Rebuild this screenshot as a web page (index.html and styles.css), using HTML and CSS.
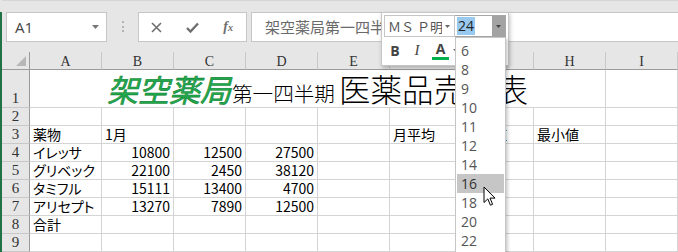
FILE: index.html
```html
<!DOCTYPE html>
<html lang="ja">
<head>
    <meta charset="UTF-8">
    <title>医薬品売上表 - Excel</title>
    <link rel="stylesheet" href="styles.css">
</head>
<body>
<div class="app">
    <div class="edge"></div>
    <div class="main">
        <div class="formula-bar">
            <div class="name-box">
                <span>A1</span>
                <svg class="caret" width="7" height="4" viewBox="0 0 7 4"><path d="M0 0H7L3.5 4Z" fill="#777"/></svg>
            </div>
            <div class="grip"><span></span></div>
            <div class="fx-buttons">
                <span class="fx-btn">
                    <svg width="11" height="11" viewBox="0 0 11 11"><path d="M1 1L10 10M10 1L1 10" stroke="#6f6f6f" stroke-width="1.6"/></svg>
                </span>
                <span class="fx-btn">
                    <svg width="13" height="11" viewBox="0 0 13 11"><path d="M1 6L4.5 9.5L12 1.5" fill="none" stroke="#6f6f6f" stroke-width="2.4"/></svg>
                </span>
                <span class="fx-btn fx-label"><i>f</i><sub>x</sub></span>
            </div>
            <div class="formula-input">架空薬局第一四半期医薬品売上表</div>
        </div>

        <div class="sheet">
            <div class="row head">
                <div class="corner"><svg width="10" height="10" viewBox="0 0 10 10"><path d="M10 0V10H0Z" fill="#b7b7b7"/></svg></div>
                <div class="ch">A</div><div class="ch">B</div><div class="ch">C</div><div class="ch">D</div><div class="ch">E</div>
                <div class="ch">F</div><div class="ch">G</div><div class="ch">H</div><div class="ch">I</div>
            </div>
            <div class="row tall">
                <div class="rh">1</div>
                <div class="cell title-cell">
                    <div class="title"><span class="brand">架空薬局</span><span class="sub">第一四半期</span><span class="big">医薬品売上表</span></div>
                </div>
                <div class="cell"></div>
            </div>
            <div class="row">
                <div class="rh">2</div>
                <div class="cell"></div><div class="cell"></div><div class="cell"></div><div class="cell"></div><div class="cell"></div>
                <div class="cell"></div><div class="cell"></div><div class="cell"></div><div class="cell"></div>
            </div>
            <div class="row">
                <div class="rh">3</div>
                <div class="cell">薬物</div><div class="cell">1月</div><div class="cell"></div><div class="cell"></div><div class="cell"></div>
                <div class="cell">月平均</div><div class="cell">最大値</div><div class="cell">最小値</div><div class="cell"></div>
            </div>
            <div class="row">
                <div class="rh">4</div>
                <div class="cell">イレッサ</div><div class="cell num">10800</div><div class="cell num">12500</div><div class="cell num">27500</div><div class="cell"></div>
                <div class="cell"></div><div class="cell"></div><div class="cell"></div><div class="cell"></div>
            </div>
            <div class="row">
                <div class="rh">5</div>
                <div class="cell">グリベック</div><div class="cell num">22100</div><div class="cell num">2450</div><div class="cell num">38120</div><div class="cell"></div>
                <div class="cell"></div><div class="cell"></div><div class="cell"></div><div class="cell"></div>
            </div>
            <div class="row">
                <div class="rh">6</div>
                <div class="cell">タミフル</div><div class="cell num">15111</div><div class="cell num">13400</div><div class="cell num">4700</div><div class="cell"></div>
                <div class="cell"></div><div class="cell"></div><div class="cell"></div><div class="cell"></div>
            </div>
            <div class="row">
                <div class="rh">7</div>
                <div class="cell">アリセプト</div><div class="cell num">13270</div><div class="cell num">7890</div><div class="cell num">12500</div><div class="cell"></div>
                <div class="cell"></div><div class="cell"></div><div class="cell"></div><div class="cell"></div>
            </div>
            <div class="row">
                <div class="rh">8</div>
                <div class="cell">合計</div><div class="cell"></div><div class="cell"></div><div class="cell"></div><div class="cell"></div>
                <div class="cell"></div><div class="cell"></div><div class="cell"></div><div class="cell"></div>
            </div>
            <div class="row">
                <div class="rh">9</div>
                <div class="cell"></div><div class="cell"></div><div class="cell"></div><div class="cell"></div><div class="cell"></div>
                <div class="cell"></div><div class="cell"></div><div class="cell"></div><div class="cell"></div>
            </div>
        </div>
    </div>

    <!-- floating mini toolbar -->
    <div class="mini-toolbar">
        <div class="mini-row">
            <div class="font-name">
                <span class="font-text">ＭＳ Ｐ明朝</span>
                <svg width="5" height="3" viewBox="0 0 5 3"><path d="M0 0H5L2.5 3Z" fill="#666"/></svg>
            </div>
            <div class="font-size">
                <span class="size-text"><span class="selected">24</span></span>
                <span class="size-drop"><svg width="5" height="3" viewBox="0 0 5 3"><path d="M0 0H5L2.5 3Z" fill="#444"/></svg></span>
            </div>
        </div>
        <div class="mini-row tools">
            <span class="tool bold">B</span>
            <span class="tool italic">I</span>
            <span class="tool color">A</span>
            <svg class="tool-caret" width="5" height="3" viewBox="0 0 5 3"><path d="M0 0H5L2.5 3Z" fill="#777"/></svg>
        </div>
    </div>

    <ul class="size-list">
        <li>6</li><li>8</li><li>9</li><li>10</li><li>11</li><li>12</li>
        <li>14</li><li class="hover">16</li><li>18</li><li>20</li><li>22</li>
    </ul>

    <svg class="cursor" width="14" height="21" viewBox="0 0 14 21">
        <path d="M1 1V16.5L4.8 12.9L7.4 19.2L9.6 18.3L7 12.1H12Z" fill="#fff" stroke="#000" stroke-width="1" stroke-linejoin="round"/>
    </svg>
</div>
</body>
</html>
```

FILE: styles.css
```css
* {
    box-sizing: border-box;
}
body {
    margin: 0;
    width: 678px;
    height: 252px;
    overflow: hidden;
    background-color: #e6e6e6;
    font-family: "Noto Sans CJK JP", sans-serif;
    color: #000;
}
.app {
    position: relative;
    display: flex;
    height: 252px;
    overflow: hidden;
}
.edge {
    flex: none;
    width: 2px;
    margin-top: 12px;
    background-color: #217346;
}
.main {
    flex: 1;
    min-width: 0;
}

/* formula bar */
.formula-bar {
    display: flex;
    align-items: flex-start;
    height: 52px;
    padding: 11px 0 0 4px;
    border-top: 1px solid #d6d6d6;
}
.name-box {
    display: flex;
    align-items: center;
    justify-content: space-between;
    width: 101px;
    height: 30px;
    padding: 0 7px 0 8px;
    background-color: #fff;
    border: 1px solid #c6c6c6;
    font-family: "Open Sans", sans-serif;
    font-size: 15px;
    color: #444;
}
.grip {
    display: flex;
    justify-content: center;
    width: 31px;
    padding-top: 9px;
}
.grip span {
    height: 11px;
    border-left: 2px dotted #b3b3b3;
}
.fx-buttons {
    display: flex;
    width: 109px;
    height: 30px;
    background-color: #fff;
    border: 1px solid #c6c6c6;
}
.fx-btn {
    display: flex;
    align-items: center;
    justify-content: center;
    width: 36px;
}
.fx-label {
    font-family: "Liberation Serif", serif;
    font-size: 14px;
    color: #6f6f6f;
    font-weight: bold;
}
.fx-label sub {
    font-size: 10px;
    font-style: italic;
    vertical-align: -1px;
}
.formula-input {
    flex: 1;
    height: 30px;
    margin: 0 -4px 0 4px;
    padding-left: 13px;
    background-color: #fff;
    border: 1px solid #c6c6c6;
    font-size: 15px;
    line-height: 28px;
    color: #6a6a6a;
    white-space: nowrap;
    overflow: hidden;
}

/* sheet grid */
.row {
    display: grid;
    grid-template-columns: 28px repeat(9, 72px);
    height: 18px;
    background-color: #fff;
}
.row.tall {
    height: 38px;
    grid-template-columns: 28px 576px 72px;
}
.cell {
    border-right: 1px solid #d4d4d4;
    border-bottom: 1px solid #d4d4d4;
    padding: 0 3px;
    font-size: 14px;
    line-height: 17px;
    white-space: nowrap;
    font-feature-settings: "palt";
}
.cell.num {
    text-align: right;
    font-feature-settings: normal;
}
.head {
    background-color: #e6e6e6;
}
.corner {
    display: flex;
    align-items: flex-end;
    justify-content: flex-end;
    padding: 0 3px 3px 0;
    border-right: 1px solid #9b9b9b;
    border-bottom: 1px solid #9b9b9b;
}
.ch {
    border-right: 1px solid #c8c8c8;
    border-bottom: 1px solid #9b9b9b;
    padding-top: 2px;
    text-align: center;
    font-family: "Liberation Serif", serif;
    font-size: 14px;
    line-height: 15px;
    color: #333;
}
.rh {
    display: flex;
    align-items: flex-end;
    justify-content: center;
    padding-bottom: 1px;
    background-color: #e6e6e6;
    border-right: 1px solid #9b9b9b;
    border-bottom: 1px solid #c8c8c8;
    font-family: "Liberation Serif", serif;
    font-size: 15px;
    line-height: 16px;
    color: #333;
}
.title-cell {
    display: flex;
    align-items: flex-end;
    justify-content: center;
    padding-bottom: 3px;
}
.title {
    line-height: 1;
    white-space: nowrap;
}
.brand {
    font-size: 31px;
    font-style: italic;
    color: #22a84b;
    -webkit-text-stroke: 0.6px #14873a;
}
.sub {
    margin-left: 1px;
    font-size: 20.6px;
    font-weight: 300;
}
.big {
    margin-left: 4px;
    font-size: 31.5px;
    font-weight: 300;
}

/* mini toolbar */
.mini-toolbar {
    position: absolute;
    left: 381px;
    top: 12px;
    width: 128px;
    height: 54px;
    padding: 2px 2px 0 2px;
    background-color: #fff;
    border: 1px solid #c6c6c6;
    box-shadow: 1px 2px 4px rgba(0, 0, 0, 0.25);
}
.mini-row {
    display: flex;
}
.font-name {
    display: flex;
    align-items: center;
    justify-content: space-between;
    width: 71px;
    height: 22px;
    padding: 0 4px 0 3px;
    border: 1px solid #c6c6c6;
    overflow: hidden;
}
.font-text {
    width: 54px;
    overflow: hidden;
    white-space: nowrap;
    font-size: 13px;
    color: #555;
}
.font-size {
    display: flex;
    width: 51px;
    height: 22px;
    border: 1px solid #a6a6a6;
    border-left: none;
}
.size-text {
    flex: 1;
    padding: 1px 0 0 2px;
    font-family: "Open Sans", sans-serif;
    font-size: 14px;
    line-height: 18px;
    color: #222;
}
.selected {
    display: inline-block;
    padding: 0 1px;
    background-color: #99c9ef;
}
.size-drop {
    display: flex;
    align-items: center;
    justify-content: center;
    width: 13px;
    background-color: #a3a3a3;
}
.tools {
    align-items: center;
    height: 26px;
    padding-top: 1px;
}
.tool {
    width: 22px;
    text-align: center;
    font-size: 14px;
    color: #444;
}
.bold {
    font-family: "Open Sans", sans-serif;
    font-weight: bold;
}
.italic {
    font-family: "Liberation Serif", serif;
    font-style: italic;
    font-size: 15px;
}
.color {
    width: 17px;
    margin-left: 4px;
    padding-bottom: 1px;
    border-bottom: 3px solid #00b050;
    font-family: "Open Sans", sans-serif;
    font-weight: bold;
    line-height: 15px;
}
.tool-caret {
    margin-left: 4px;
}

/* font size dropdown */
.size-list {
    position: absolute;
    left: 455px;
    top: 37px;
    width: 51px;
    height: 216px;
    margin: 0;
    padding: 3px 1px 0 1px;
    list-style: none;
    background-color: #fff;
    border: 1px solid #c6c6c6;
    border-bottom: none;
    box-shadow: 2px 2px 3px rgba(0, 0, 0, 0.2);
    overflow: hidden;
}
.size-list li {
    height: 19px;
    padding-left: 4px;
    font-family: "Open Sans", sans-serif;
    font-size: 14px;
    line-height: 19px;
    color: #555;
}
.size-list li.hover {
    background-color: #c6c6c6;
    color: #333;
}
.cursor {
    position: absolute;
    left: 483px;
    top: 186px;
}
```
